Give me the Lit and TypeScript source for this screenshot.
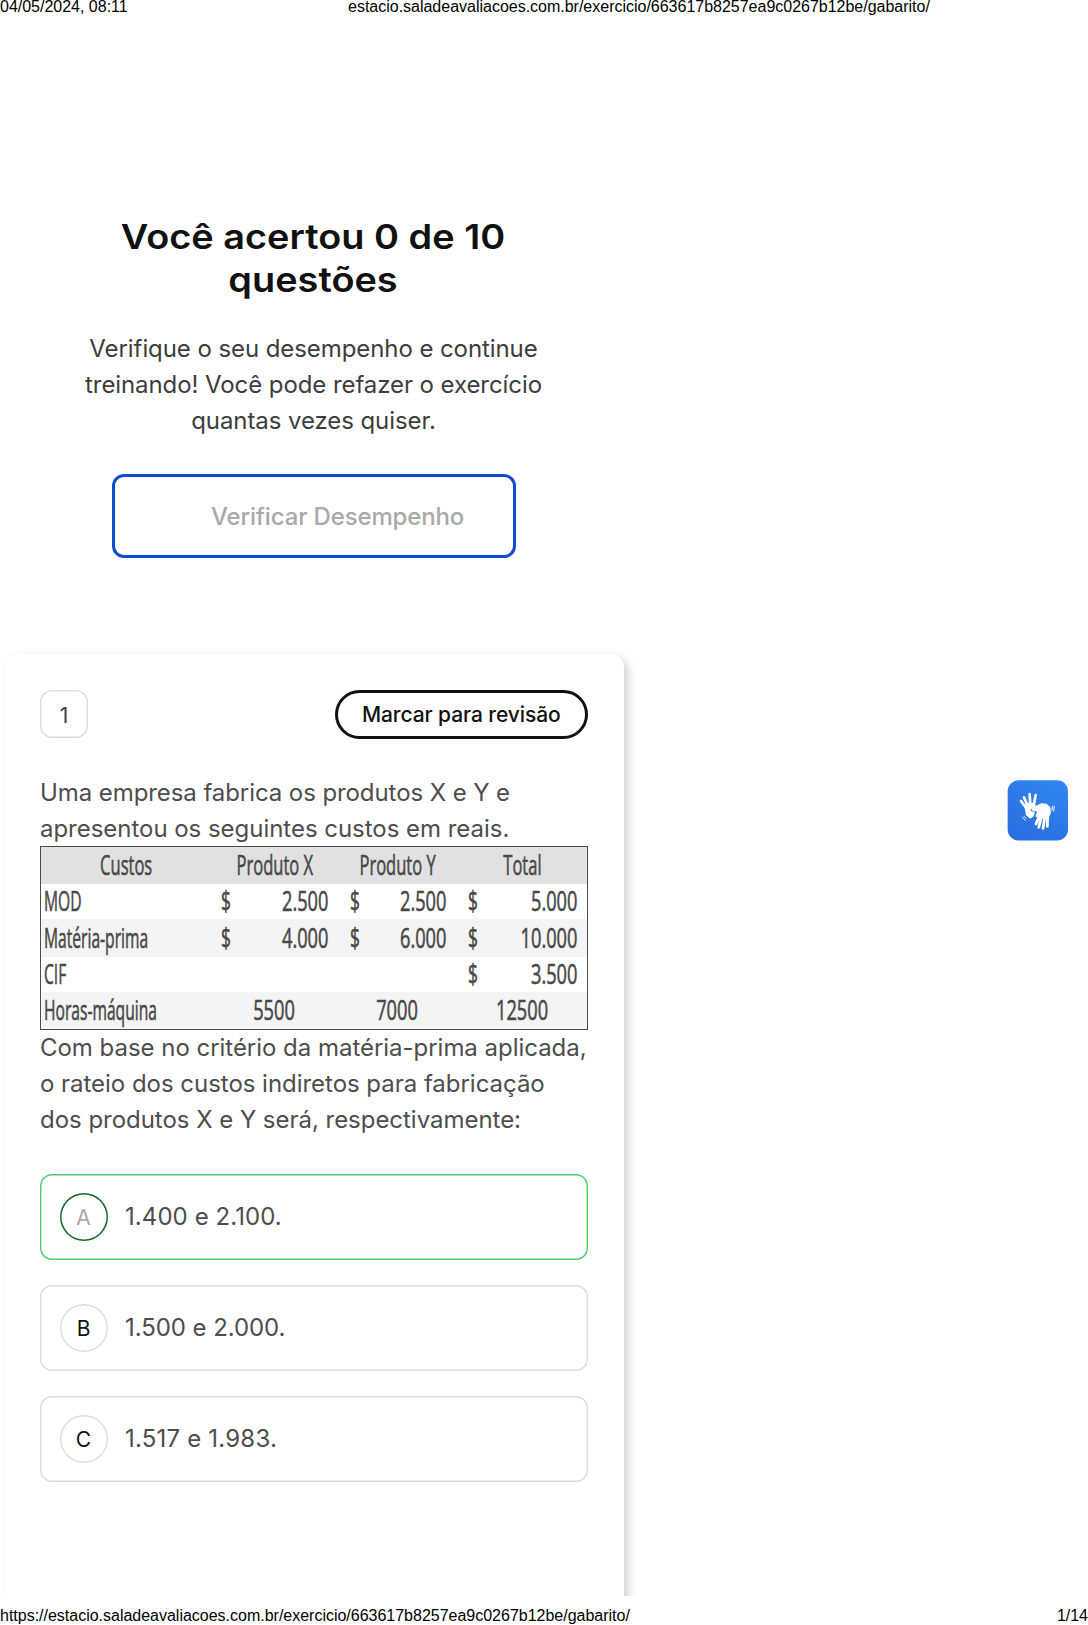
import { LitElement, html, svg, css, nothing } from "lit";
import { customElement, property } from "lit/decorators.js";
import { classMap } from "lit/directives/class-map.js";

const URL_PATH = "estacio.saladeavaliacoes.com.br/exercicio/663617b8257ea9c0267b12be/gabarito/";

@customElement("vlibras-badge")
class VlibrasBadge extends LitElement {
  static styles = css`
    :host { display: block; width: 61px; height: 61px; }
    .box { display: block; width: 61px; height: 61px; }
  `;
  render() {
    return html`<svg class="box" viewBox="0 0 183 183" role="img">
      ${svg`
      <defs>
        <linearGradient id="g" x1="0" y1="1" x2="0.6" y2="0">
          <stop offset="0" stop-color="#2a6bdb"></stop>
          <stop offset="1" stop-color="#3084f0"></stop>
        </linearGradient>
      </defs>
      <rect x="2" y="0.5" width="181" height="181" rx="33" fill="url(#g)"></rect>
      <g fill="none" stroke="#fff" stroke-linecap="round" stroke-linejoin="round">
        <path stroke-width="8" d="M42 63 L58 85 M51 52 L62 78 M68 42 L70 78 M86 45 L80 78"></path>
        <path stroke-width="7" fill="#fff" d="M56 80 L62 72 L80 72 L82 76 L73 81 L67 89 L71 97 L80 98 L77 107 L70 112 L60 104 Z"></path>
        <path stroke-width="7" fill="#fff" d="M77 86 L92 79 L104 73 L118 75 L127 84 L128 98 L122 112 L100 112 L89 108 L94 96 L88 90 L79 90 Z"></path>
        <path stroke-width="8.5" d="M97 108 L87 132 M104 110 L95 142 M114 110 L108 145 M122 106 L121 139"></path>
        <path stroke-width="3" d="M136 79 L135 91 M142 79 L140 93 M51 109 L57 115 M47 113 L55 121"></path>
      </g>`}
    </svg>`;
  }
}

interface Cell { text?: string; kind: "head" | "label" | "money" | "count" | "empty"; }
const head = (text: string): Cell => ({ text, kind: "head" });
const label = (text: string): Cell => ({ text, kind: "label" });
const money = (text: string): Cell => ({ text, kind: "money" });
const count = (text: string): Cell => ({ text, kind: "count" });
const empty: Cell = { kind: "empty" };

@customElement("cost-table")
class CostTable extends LitElement {
  static styles = css`
    :host { display: block; }
    .table {
      box-sizing: border-box; height: 184px; border: 1px solid #4c4c4c;
      display: grid; grid-template-rows: 37px 35px 38px 35px 37px;
      font: 28px/28px "Open Sans", "Noto Sans", sans-serif; color: #484848;
      -webkit-text-stroke: 0.6px #484848;
    }
    .row {
      box-sizing: border-box; padding-bottom: 4px;
      display: grid; grid-template-columns: 170px 127px 119px 130px;
    }
    .row.shade { background: #f4f4f4; padding-bottom: 3px; }
    .row.top { background: #e1e1e1; }
    .cell { display: flex; align-items: center; white-space: nowrap; min-width: 0; }
    .txt { flex: none; transform: scaleX(0.65); }
    .head, .count { justify-content: center; }
    .head .txt { transform: scaleX(0.59); }
    .label { padding-left: 3px; }
    .label .txt { transform: scaleX(0.558); transform-origin: left; }
    .money { justify-content: space-between; padding: 0 10px; }
    .money + .money { padding-left: 12px; padding-right: 11px; }
    .money:last-child, .empty + .money { padding-left: 11px; padding-right: 10px; }
    .money .sign { transform: scaleX(0.62); transform-origin: left; }
    .money .value { transform-origin: right; }
  `;
  private rows: Cell[][] = [
    [head("Custos"), head("Produto X"), head("Produto Y"), head("Total")],
    [label("MOD"), money("2.500"), money("2.500"), money("5.000")],
    [label("Matéria-prima"), money("4.000"), money("6.000"), money("10.000")],
    [label("CIF"), empty, empty, money("3.500")],
    [label("Horas-máquina"), count("5500"), count("7000"), count("12500")],
  ];
  render() {
    return html`<div class="table">
      ${this.rows.map((cells, i) => html`
        <div class=${classMap({ row: true, top: i === 0, shade: i === 2 || i === 4 })}>
          ${cells.map((c) => html`<div class="cell ${c.kind}">
            ${c.kind === "money" ? html`<span class="txt sign">$</span>` : nothing}
            ${c.text ? html`<span class="txt value">${c.text}</span>` : nothing}
          </div>`)}
        </div>`)}
    </div>`;
  }
}

@customElement("answer-option")
class AnswerOption extends LitElement {
  static styles = css`
    :host { display: block; }
    .option {
      box-sizing: border-box; height: 86.5px; padding-left: 19.5px; border-radius: 12px;
      box-shadow: inset 0 0 0 1.4px #dcdcdc;
      display: flex; align-items: center; gap: 17.5px;
    }
    .letter {
      width: 48px; height: 48px; border-radius: 50%; box-shadow: inset 0 0 0 1.4px #dcdcdc;
      display: flex; align-items: center; justify-content: center;
      font: 21px/24px Inter, sans-serif; color: #111;
    }
    .glyph { padding-top: 2px; }
    .text { font: 24px/36px Inter, sans-serif; color: #4d4d4d; white-space: nowrap; }
    .correct { box-shadow: inset 0 0 0 1.4px #4fcb6b; }
    .correct .letter { box-shadow: inset 0 0 0 1.5px #14692b; color: #a9a9a9; }
  `;
  @property() letter = "";
  @property() text = "";
  @property({ type: Boolean }) correct = false;
  @property({ type: Number }) tracking = 0;
  render() {
    return html`<div class=${classMap({ option: true, correct: this.correct })}>
      <span class="letter"><span class="glyph">${this.letter}</span></span>
      <span class="text" style="letter-spacing:${this.tracking}px">${this.text}</span>
    </div>`;
  }
}

@customElement("app-root")
class AppRoot extends LitElement {
  static styles = css`
    :host { display: block; }
    .page {
      width: 1088px; height: 1625px; overflow: hidden; background: #fff;
      display: grid; grid-template-rows: 215px 433px 948px 29px;
      font-family: Inter, sans-serif; position: relative;
    }
    .print { font: 16px/14px "Liberation Sans", Arial, sans-serif; color: #000; white-space: nowrap; }
    .print-top { display: grid; grid-template-columns: 348px 1fr; align-items: start; letter-spacing: -0.01px; }
    .print-bottom { display: flex; justify-content: space-between; padding-top: 13px; letter-spacing: -0.01px; }
    .hero { width: 627px; display: flex; flex-direction: column; align-items: center; }
    .title {
      margin: 0; font-size: 34.5px; line-height: 43px; font-weight: 600; color: #111;
      text-align: center; white-space: nowrap; transform: scaleX(1.098);
    }
    .lead {
      margin: 30px 0 0; font-size: 24px; line-height: 36px; color: #3d3d3d;
      text-align: center; letter-spacing: -0.08px; white-space: nowrap;
    }
    .verify {
      box-sizing: border-box; width: 404px; height: 84px; margin: 35px 0 0 1px; padding: 2px 0 0 96px;
      border: 3px solid #124bcb; border-radius: 12px; background: #fff; text-align: left;
      font: 500 24px/30px Inter, sans-serif; letter-spacing: -0.15px; color: #a9a9a9;
    }
    .question { margin-left: 4px; width: 650px; overflow: hidden; }
    .card {
      box-sizing: border-box; width: 619px; height: 980px; margin: 6px 0 0 1px; padding: 36px 36px 0 35px;
      border-radius: 13px; background: #fff; box-shadow: 4px 4px 10px rgba(0, 0, 0, 0.19);
    }
    .card-head { display: flex; justify-content: space-between; align-items: flex-start; }
    .number {
      box-sizing: border-box; width: 48px; height: 48px; border-radius: 12px; box-shadow: inset 0 0 0 1.4px #dcdcdc;
      display: flex; align-items: center; justify-content: center; padding-top: 3px;
      font-size: 21px; line-height: 24px; color: #3d3d3d;
    }
    .review {
      box-sizing: border-box; width: 253.5px; height: 48.5px; padding: 0;
      border: 3px solid #111; border-radius: 25px; background: #fff;
      font: 500 21px/25px Inter, sans-serif; letter-spacing: -0.09px; color: #111; white-space: nowrap;
    }
    .statement {
      margin: 0; font-size: 24px; line-height: 36px; letter-spacing: -0.03px; color: #4d4d4d; white-space: nowrap;
    }
    .opening { letter-spacing: -0.08px; }
    .first { margin: 36.5px 0 -1px; }
    .options { display: flex; flex-direction: column; gap: 24.5px; margin-top: 35.5px; }
    .vlibras { position: absolute; left: 1007px; top: 780px; }
  `;
  render() {
    return html`<div class="page">
      <header class="print print-top">
        <span>04/05/2024, 08:11</span><span>${URL_PATH}</span>
      </header>
      <section class="hero">
        <h1 class="title">Você acertou 0 de 10<br />questões</h1>
        <p class="lead">Verifique o seu desempenho e continue<br />treinando! Você pode refazer o exercício<br />quantas vezes quiser.</p>
        <button class="verify">Verificar Desempenho</button>
      </section>
      <section class="question">
        <div class="card">
          <div class="card-head">
            <span class="number">1</span>
            <button class="review">Marcar para revisão</button>
          </div>
          <p class="statement first"><span class="opening">Uma empresa fabrica os produtos X e Y e</span><br />apresentou os seguintes custos em reais.</p>
          <cost-table></cost-table>
          <p class="statement">Com base no critério da matéria-prima aplicada,<br />o rateio dos custos indiretos para fabricação<br />dos produtos X e Y será, respectivamente:</p>
          <div class="options">
            <answer-option letter="A" text="1.400 e 2.100." tracking="0.07" correct></answer-option>
            <answer-option letter="B" text="1.500 e 2.000." tracking="-0.07"></answer-option>
            <answer-option letter="C" text="1.517 e 1.983." tracking="0.2"></answer-option>
          </div>
        </div>
      </section>
      <footer class="print print-bottom"><span>https://${URL_PATH}</span><span>1/14</span></footer>
      <vlibras-badge class="vlibras"></vlibras-badge>
    </div>`;
  }
}
